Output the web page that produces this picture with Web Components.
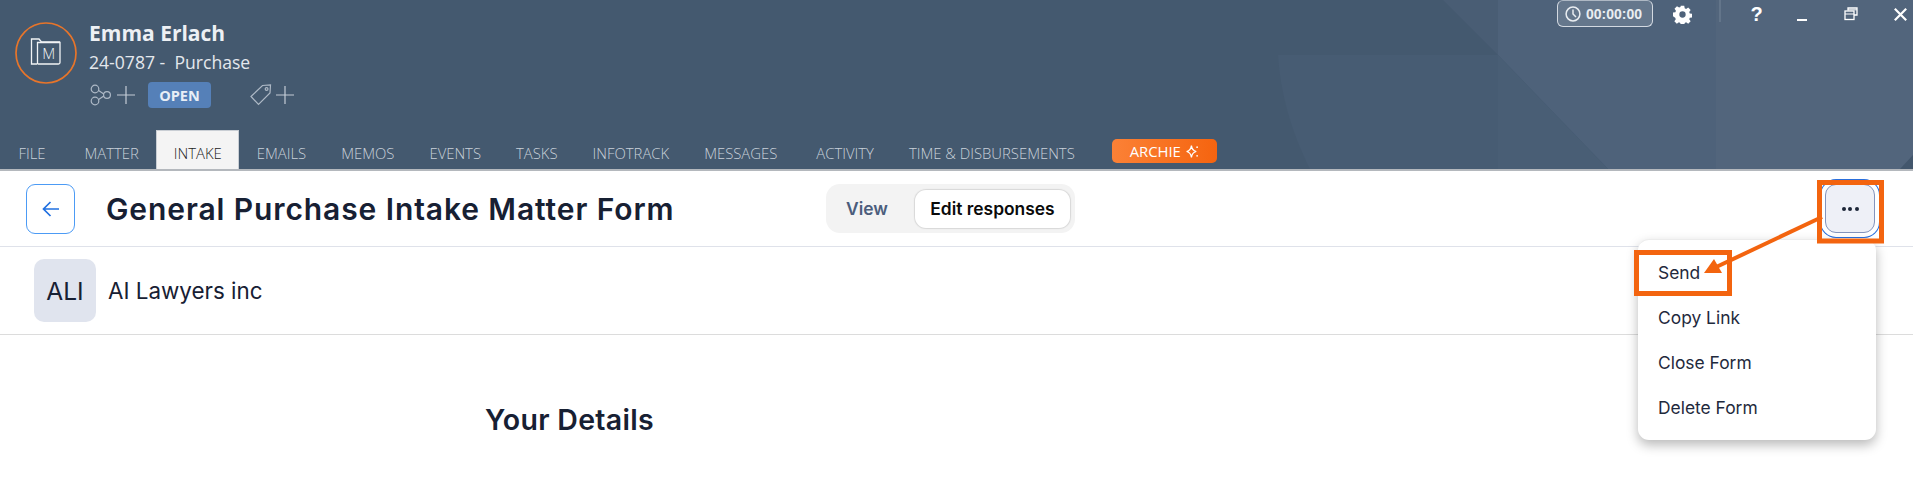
<!doctype html>
<html lang="en">
<head>
<meta charset="utf-8">
<title>General Purchase Intake Matter Form</title>
<style>
  html, body { margin: 0; height: 100%; background: #fff; overflow: hidden; }
  body { position: relative; font-family: Inter, "Liberation Sans", sans-serif; }
</style>
</head>
<body>
<matter-header name="Emma Erlach" reference="24-0787" kind="Purchase" status="OPEN"></matter-header>
<form-toolbar heading="General Purchase Intake Matter Form">
  <action-menu>
    <menu-row>Send</menu-row>
    <menu-row>Copy Link</menu-row>
    <menu-row>Close Form</menu-row>
    <menu-row>Delete Form</menu-row>
  </action-menu>
</form-toolbar>
<firm-row initials="ALI">AI Lawyers inc</firm-row>
<form-section>Your Details</form-section>
<callout-layer></callout-layer>

<script>
  class ShadowElement extends HTMLElement {
    connectedCallback() {
      if (this.shadowRoot) return;
      this.attachShadow({ mode: "open" }).innerHTML = this.render();
    }
  }

  customElements.define(
    "window-controls",
    class extends ShadowElement {
      render() {
        return /*html*/ `
          <style>
            :host { display: flex; flex: none; align-items: flex-start; height: 28px; padding-right: 3px; color: #fff; }
            .timer {
              display: flex; flex: none; align-items: center; gap: 5px;
              box-sizing: border-box; width: 96px; height: 27px; padding-left: 7px;
              border: 1px solid #d3d9e1; border-top-color: #aeb8c4;
              border-radius: 6px;
              background: #65778c; color: #e9edf1;
              font: 700 14px "Liberation Sans", Arial, sans-serif;
            }
            .cell { display: flex; flex: none; justify-content: center; height: 28px; align-items: center; }
            .gear { width: 58px; }
            .rule { flex: none; width: 2px; height: 22px; margin: 0 0 0 8px; background: #63758a; }
            .help { width: 71px; font: 700 20px "Liberation Sans", Arial, sans-serif; }
            .min { width: 20px; }
            .restore { width: 78px; }
            .close { width: 20px; }
          </style>
          <div class="timer">
            <svg width="16" height="16" viewBox="0 0 16 16" fill="none" stroke="#e9edf1" stroke-width="1.5"><circle cx="8" cy="8" r="6.9"/><path d="M8 3.6V8l3 3"/></svg>
            <span>00:00:00</span>
          </div>
          <div class="cell gear">
            <svg width="19" height="19" viewBox="0 0 24 24" fill="#fff"><path fill-rule="evenodd" d="M9.8 1h4.4l.6 3.2 1.7.7 2.7-1.8 3.1 3.1-1.8 2.7.7 1.7 3.2.6v4.4l-3.2.6-.7 1.7 1.8 2.7-3.1 3.1-2.7-1.8-1.7.7-.6 3.2H9.8l-.6-3.2-1.7-.7-2.7 1.8-3.1-3.1 1.8-2.7-.7-1.7L-.2 14V9.6l3.2-.6.7-1.7-1.8-2.7 3.1-3.1 2.7 1.8 1.7-.7zM12 8a4 4 0 1 0 0 8 4 4 0 0 0 0-8z"/></svg>
          </div>
          <div class="rule"></div>
          <div class="cell help">?</div>
          <div class="cell min"><svg width="10" height="28" viewBox="0 0 10 28"><rect y="19" width="10" height="2" fill="#fff"/></svg></div>
          <div class="cell restore">
            <svg width="14" height="14" viewBox="0 0 14 14" fill="none" stroke="#fff" stroke-width="1.3"><path d="M4 3.5V1h9v7h-3"/><rect x="1" y="4" width="9" height="8.5"/><path d="M1 7h9M4 2.8h9" stroke-width="1"/></svg>
          </div>
          <div class="cell close">
            <svg width="13" height="13" viewBox="0 0 13 13" stroke="#fff" stroke-width="2.2"><path d="M.8.8l11.4 11.4M12.2.8L.8 12.2"/></svg>
          </div>
        `;
      }
    }
  );

  customElements.define(
    "tab-item",
    class extends ShadowElement {
      render() {
        return /*html*/ `
          <style>
            :host {
              display: flex; align-items: center; box-sizing: border-box; height: 39px;
              padding: 6px 17.5px 0; color: #c9d1da; white-space: nowrap;
              font: 300 14.85px "Open Sans", sans-serif;
            }
            :host([active]) {
              background: #f4f4f4; color: #1c1c1c;
              border: 1px solid #c9ced4; border-bottom: 0;
              padding: 5px 16.5px 0; font-weight: 300;
            }
          </style>
          <slot></slot>
        `;
      }
    }
  );

  customElements.define(
    "archie-button",
    class extends ShadowElement {
      render() {
        return /*html*/ `
          <style>
            :host {
              display: flex; align-items: center; justify-content: center; gap: 4px;
              width: 105px; height: 24px; margin: 0 0 6px; border-radius: 5px;
              background: linear-gradient(90deg, #fb8136, #f5640f); color: #fff;
              font: 400 14.85px "Open Sans", sans-serif;
            }
          </style>
          <slot></slot>
          <svg width="15" height="15" viewBox="0 0 14 14" fill="none" stroke="#fff" stroke-width="1.2"><path d="M6 1.5C6.4 5 7.4 6.2 10.5 7 7.4 7.8 6.4 9 6 12.5 5.6 9 4.6 7.8 1.5 7 4.6 6.2 5.6 5 6 1.5z"/><circle cx="11.3" cy="3" r=".8" fill="#fff" stroke="none"/><circle cx="11.3" cy="11" r=".8" fill="#fff" stroke="none"/></svg>
        `;
      }
    }
  );

  customElements.define(
    "matter-header",
    class extends ShadowElement {
      render() {
        return /*html*/ `
          <style>
            :host {
              display: block; position: relative; box-sizing: content-box; height: 169px;
              background: #44596f; border-bottom: 2px solid #b4b8bd; overflow: hidden;
              font-family: "Open Sans", sans-serif;
            }
            .art { position: absolute; inset: 0; }
            .content { position: relative; display: flex; flex-direction: column; height: 100%; }
            .top { display: flex; justify-content: space-between; align-items: flex-start; }
            .identity { display: flex; padding: 22px 0 0 15px; gap: 13px; }
            .name { margin: -1px 0 0 -1px; color: #edf0f4; font-size: 21px; font-weight: 700; line-height: 24px; }
            .ref { margin: 5px 0 0 -1px; color: #e4e8ed; font-size: 17.6px; line-height: 24px; white-space: pre; }
            .meta { display: flex; align-items: center; height: 26px; margin-top: 8px; }
            .badge {
              display: flex; align-items: center; justify-content: center; box-sizing: border-box;
              width: 63px; height: 26px; margin-left: 13px; border-radius: 4px;
              background: #5580b8; color: #e8eef6; font-size: 14.5px; font-weight: 700;
            }
            .tag { margin-left: 39px; }
            .tabs { display: flex; align-items: flex-end; margin-top: auto; padding-left: 1px; }
            .tabs tab-item:nth-child(2), .tabs tab-item:nth-child(10) { margin-left: 4px; }
            archie-button { margin-left: 20px; }
          </style>
          <svg class="art" viewBox="0 0 1913 169">
            <path d="M1278 55H1498V169H1310C1290 130 1280 90 1278 55z" fill="#475c73"/>
            <path d="M1443 0H1498V55z" fill="#495d74"/>
            <path d="M1498 0H1913V169H1608L1498 55z" fill="#4e627a"/>
            <path d="M1498 55L1608 169H1498z" fill="#495e75"/>
            <path d="M1716 0H1913V169H1716z" fill="#52657c"/>
            <path d="M1913 155L1900 169H1913z" fill="#42566c"/>
          </svg>
          <div class="content">
            <div class="top">
              <div class="identity">
                <svg width="62" height="62" viewBox="0 0 62 62" fill="none">
                  <circle cx="31" cy="31" r="30" stroke="#e8752a" stroke-width="1.7"/>
                  <path d="M22 42H16.5V17H24l2.5 3H45" stroke="#f1f3f5" stroke-width="1.3"/>
                  <path d="M22.5 42V20.5H45V40.5a1.5 1.5 0 0 1-1.5 1.5H22.5" stroke="#f1f3f5" stroke-width="1.3"/>
                  <text x="33.8" y="36.5" text-anchor="middle" fill="#f1f3f5" font-family="Open Sans" font-size="15" font-weight="300">M</text>
                </svg>
                <div>
                  <div class="name">${this.getAttribute("name")}</div>
                  <div class="ref">${this.getAttribute("reference")} -  ${this.getAttribute("kind")}</div>
                  <div class="meta">
                    <svg width="45" height="26" viewBox="0 0 45 26" fill="none" stroke="#aeb9c6" stroke-width="1.2">
                      <circle cx="5" cy="7" r="3.8"/><circle cx="5" cy="19" r="3.8"/><circle cx="17" cy="13" r="3.4"/>
                      <path d="M8.6 8.6L13.8 12M8.6 17.6L13.8 14"/>
                      <path d="M27 13H45M36 4V22" stroke="#c3ccd6"/>
                    </svg>
                    <div class="badge">${this.getAttribute("status")}</div>
                    <svg class="tag" width="44" height="26" viewBox="0 0 44 26" fill="none" stroke="#aeb9c6" stroke-width="1.2">
                      <path d="M1 14.5L12.5 3.5 20.5 3 20 11 8.5 22.5z"/><circle cx="16.6" cy="7" r="1.4"/>
                      <path d="M26 13H44M35 4V22" stroke="#c3ccd6"/>
                    </svg>
                  </div>
                </div>
              </div>
              <window-controls></window-controls>
            </div>
            <div class="tabs">
              <tab-item>FILE</tab-item>
              <tab-item>MATTER</tab-item>
              <tab-item active>INTAKE</tab-item>
              <tab-item>EMAILS</tab-item>
              <tab-item>MEMOS</tab-item>
              <tab-item>EVENTS</tab-item>
              <tab-item>TASKS</tab-item>
              <tab-item>INFOTRACK</tab-item>
              <tab-item>MESSAGES</tab-item>
              <tab-item>ACTIVITY</tab-item>
              <tab-item>TIME &amp; DISBURSEMENTS</tab-item>
              <archie-button>ARCHIE</archie-button>
            </div>
          </div>
        `;
      }
    }
  );

  customElements.define(
    "view-toggle",
    class extends ShadowElement {
      render() {
        return /*html*/ `
          <style>
            :host {
              display: flex; align-items: center; box-sizing: border-box; width: 249px; height: 49px;
              padding: 0 5px 0 20px; border-radius: 14px; background: #f3f3f3;
              font: 600 17.4px Inter, "Liberation Sans", sans-serif;
            }
            .view { color: #4b5d7c; width: 69px; }
            .edit {
              display: flex; align-items: center; justify-content: center; flex: 1; height: 38px;
              border-radius: 11px; background: #fff; color: #0a0a0a;
              box-shadow: 0 0 1px 1px #d8d8d8;
            }
          </style>
          <span class="view">View</span>
          <span class="edit">Edit responses</span>
        `;
      }
    }
  );

  customElements.define(
    "menu-row",
    class extends ShadowElement {
      render() {
        return /*html*/ `
          <style>
            :host {
              display: flex; align-items: center; height: 45px; padding-left: 20px;
              color: #1f2a3d; font: 400 17.4px Inter, "Liberation Sans", sans-serif;
            }
          </style>
          <slot></slot>
        `;
      }
    }
  );

  customElements.define(
    "action-menu",
    class extends ShadowElement {
      render() {
        return /*html*/ `
          <style>
            :host { display: block; position: relative; width: 50px; height: 49px; }
            button {
              display: flex; align-items: center; justify-content: center; gap: 2.5px;
              box-sizing: border-box; width: 50px; height: 49px; padding: 0;
              border: 1px solid #8394bd; border-radius: 11px; background: #eef0f7;
              box-shadow: 0 0 0 4px #fff, 0 0 0 5px #2a6fdc;
            }
            i { width: 4px; height: 4px; border-radius: 50%; background: #1c2638; }
            .pop {
              position: absolute; top: 55px; right: -1px; width: 238px; height: 201px;
              box-sizing: border-box; padding-top: 10px; border-radius: 11px; background: #fff;
              border-top: 1px solid #ececec;
              box-shadow: 0 5px 12px rgba(0, 0, 0, .28);
            }
          </style>
          <button aria-label="More"><i></i><i></i><i></i></button>
          <div class="pop"><slot></slot></div>
        `;
      }
    }
  );

  customElements.define(
    "form-toolbar",
    class extends ShadowElement {
      render() {
        return /*html*/ `
          <style>
            :host {
              display: flex; align-items: center; box-sizing: border-box; height: 76px;
              padding: 0 38px 0 26px; border-bottom: 1.5px solid #dfe2ea; background: #fff;
            }
            .back {
              display: flex; flex: none; align-items: center; justify-content: center; box-sizing: border-box;
              width: 49px; height: 50px; border: 1px solid #4c9bf5; border-radius: 9px;
            }
            h1 {
              box-sizing: border-box; flex: none; width: 751px; margin: 0; padding-left: 31px; color: #172033;
              font: 600 30px Inter, "Liberation Sans", sans-serif; letter-spacing: .9px; white-space: nowrap;
            }
            view-toggle { margin-right: auto; }
          </style>
          <div class="back">
            <svg width="20" height="20" viewBox="0 0 20 20" fill="none" stroke="#2170e0" stroke-width="1.7"><path d="M18 10H2.5M9.5 3L2.5 10l7 7"/></svg>
          </div>
          <h1>${this.getAttribute("heading")}</h1>
          <view-toggle></view-toggle>
          <slot></slot>
        `;
      }
    }
  );

  customElements.define(
    "firm-row",
    class extends ShadowElement {
      render() {
        return /*html*/ `
          <style>
            :host {
              display: flex; align-items: center; gap: 12px; box-sizing: border-box; height: 88px;
              padding: 0 0 0 34px; border-bottom: 1.5px solid #dcdcdc; background: #fff;
              color: #172033; font: 400 22.4px Inter, "Liberation Sans", sans-serif;
            }
            .logo {
              display: flex; align-items: center; justify-content: center; width: 62px; height: 63px;
              border-radius: 10px; background: #e0e4ee; font-size: 24.5px;
            }
          </style>
          <div class="logo">${this.getAttribute("initials")}</div>
          <slot></slot>
        `;
      }
    }
  );

  customElements.define(
    "form-section",
    class extends ShadowElement {
      render() {
        return /*html*/ `
          <style>
            :host {
              display: block; padding: 66px 0 0 485px; color: #172033;
              font: 600 28.5px/38px Inter, "Liberation Sans", sans-serif; letter-spacing: .3px;
            }
          </style>
          <slot></slot>
        `;
      }
    }
  );

  customElements.define(
    "callout-layer",
    class extends ShadowElement {
      render() {
        return /*html*/ `
          <style>
            :host { position: absolute; inset: 0; pointer-events: none; }
            svg { display: block; }
          </style>
          <svg width="1913" height="488" viewBox="0 0 1913 488" fill="none" stroke="#f3640f">
            <rect x="1819.5" y="182.5" width="62" height="58.5" stroke-width="5"/>
            <rect x="1636.5" y="252.5" width="93" height="41" stroke-width="5"/>
            <path d="M1822 217L1712 269" stroke-width="4"/>
            <path d="M1704 273L1714 259L1722 273z" fill="#f3640f" stroke="none"/>
          </svg>
        `;
      }
    }
  );
</script>
</body>
</html>
